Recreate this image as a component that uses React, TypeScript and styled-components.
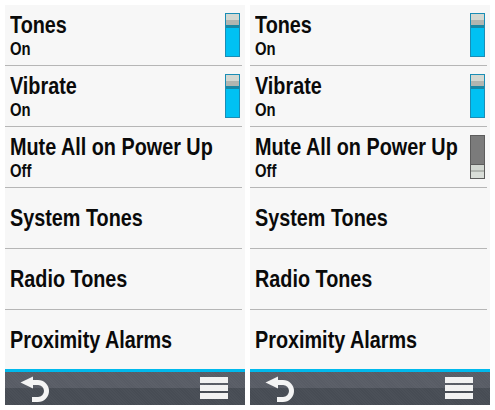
import React from "react";
import styled, { createGlobalStyle } from "styled-components";

const Global = createGlobalStyle`
  html, body { margin: 0; padding: 0; background: #ffffff; }
  body { font-family: "Liberation Sans", Arial, sans-serif; }
`;

const Screen = styled.div`
  display: flex;
  gap: 5px;
  padding: 5px;
`;

const Panel = styled.div`
  width: 240px;
  height: 400px;
  flex: none;
  background: #f7f7f7;
  display: flex;
  flex-direction: column;
  overflow: hidden;
`;

const List = styled.div`
  flex: 1;
  display: flex;
  flex-direction: column;
`;

const Row = styled.div<{ $last?: boolean }>`
  height: ${(p) => (p.$last ? "59px" : "60px")};
  margin-right: 3px;
  padding: 0 2px 0 5px;
  display: flex;
  align-items: center;
  gap: 4px;
  border-bottom: ${(p) => (p.$last ? "none" : "1px solid #b6b6b6")};
`;

/* the device font is a condensed bold face; squeeze Liberation Sans Bold to its width */
const Texts = styled.div`
  flex: 1;
  min-width: 0;
  display: flex;
  flex-direction: column;
  transform: scaleX(0.825);
  transform-origin: left center;
`;

const Title = styled.div`
  font-size: 24px;
  line-height: 26px;
  font-weight: bold;
  color: #0a0a0a;
  white-space: nowrap;
`;

const Sub = styled.div`
  margin-top: 2px;
  font-size: 18px;
  line-height: 19px;
  font-weight: bold;
  color: #0a0a0a;
`;

const Toggle = styled.div<{ $on: boolean }>`
  width: 13px;
  height: 42px;
  flex: none;
  border: 1px solid ${(p) => (p.$on ? "#1a8db5" : "#5c5c5c")};
  background: ${(p) => (p.$on ? "#00c1f3" : "#7b7b7b")};
  display: flex;
  flex-direction: column;
  justify-content: ${(p) => (p.$on ? "flex-start" : "flex-end")};
`;

const Knob = styled.div<{ $on: boolean }>`
  height: 14px;
  background: ${(p) =>
    p.$on
      ? "linear-gradient(#d3d8d2 0 6px, #b1b5b0 6px 11px, #1a87a3 11px 14px)"
      : "linear-gradient(#5c5c5c 0 1px, #d3d8d2 1px 6px, #b1b5b0 6px 8px, #d9ddd8 8px 14px)"};
`;

const Accent = styled.div`
  height: 3px;
  background: #00b9ec;
`;

const Bar = styled.div`
  height: 33px;
  display: flex;
  align-items: flex-start;
  justify-content: space-between;
  padding: 0 17px 0 15px;
  background:
    repeating-linear-gradient(45deg, rgba(255,255,255,0.025) 0 1px, transparent 1px 2px),
    linear-gradient(#585c65 0 16px, #474c54 16px 33px);
`;

const BackIcon = styled.svg`
  width: 30px;
  height: 30px;
  margin-top: 3px;
`;

const Menu = styled.div`
  width: 28px;
  margin-top: 5px;
  display: flex;
  flex-direction: column;
  gap: 2px;
`;

const MenuLine = styled.div`
  height: 6px;
  background: #f2f2f2;
`;

type Item = { title: string; sub?: string; toggle?: boolean };

const Back = () => (
  <BackIcon viewBox="0 0 30 30">
    <path d="M11 7.5 H18 A8.5 8.5 0 0 1 18 24.5 H12" stroke="#f4f4f4" strokeWidth="5" fill="none" />
    <polygon points="0.5,7.5 13,1.5 13,13.5" fill="#f4f4f4" />
  </BackIcon>
);

const Device = ({ items }: { items: Item[] }) => (
  <Panel>
    <List>
      {items.map((it, i) => (
        <Row key={it.title} $last={i === items.length - 1}>
          <Texts>
            <Title>{it.title}</Title>
            {it.sub && <Sub>{it.sub}</Sub>}
          </Texts>
          {it.toggle !== undefined && (
            <Toggle $on={it.toggle}>
              <Knob $on={it.toggle} />
            </Toggle>
          )}
        </Row>
      ))}
    </List>
    <Accent />
    <Bar>
      <Back />
      <Menu>
        <MenuLine />
        <MenuLine />
        <MenuLine />
      </Menu>
    </Bar>
  </Panel>
);

const left: Item[] = [
  { title: "Tones", sub: "On", toggle: true },
  { title: "Vibrate", sub: "On", toggle: true },
  { title: "Mute All on Power Up", sub: "Off" },
  { title: "System Tones" },
  { title: "Radio Tones" },
  { title: "Proximity Alarms" },
];

const right: Item[] = [
  { title: "Tones", sub: "On", toggle: true },
  { title: "Vibrate", sub: "On", toggle: true },
  { title: "Mute All on Power Up", sub: "Off", toggle: false },
  { title: "System Tones" },
  { title: "Radio Tones" },
  { title: "Proximity Alarms" },
];

export default function App() {
  return (
    <>
      <Global />
      <Screen>
        <Device items={left} />
        <Device items={right} />
      </Screen>
    </>
  );
}
